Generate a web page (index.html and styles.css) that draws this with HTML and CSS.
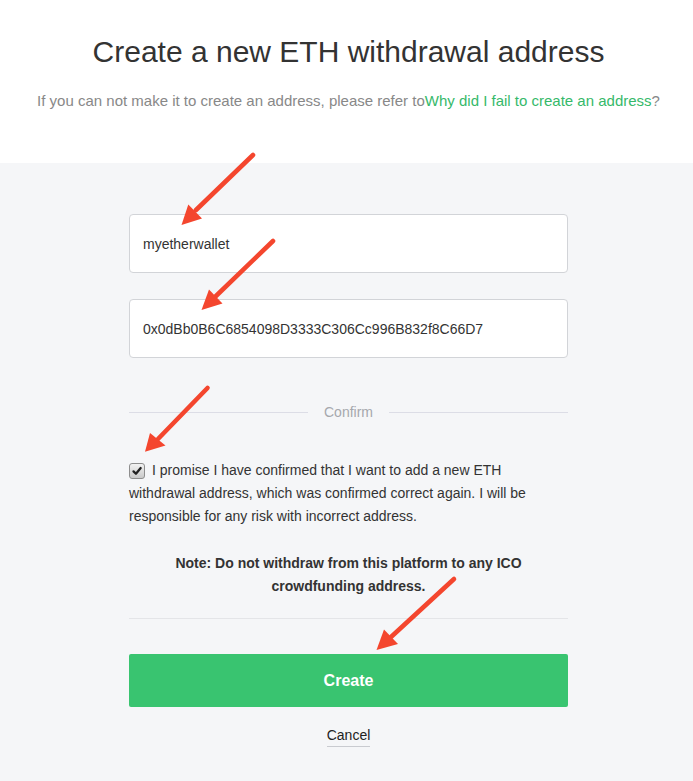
FILE: index.html
```html
<!DOCTYPE html>
<html lang="en">
<head>
<meta charset="utf-8">
<title>Create a new ETH withdrawal address</title>
<link rel="stylesheet" href="styles.css">
</head>
<body>
<div class="page">
  <header class="hero">
    <h1 class="title">Create a new ETH withdrawal address</h1>
    <p class="subtitle">If you can not make it to create an address, please refer to<a class="link" href="#">Why did I fail to create an address</a>?</p>
  </header>
  <main class="panel">
    <form class="form">
      <div class="field">myetherwallet</div>
      <div class="field">0x0dBb0B6C6854098D3333C306Cc996B832f8C66D7</div>
      <div class="divider"><span class="divider-line"></span><span class="divider-text">Confirm</span><span class="divider-line"></span></div>
      <p class="promise"><span class="checkbox"><svg viewBox="0 0 16 16" width="16" height="16"><path d="M4 8.4 L6.8 11.2 L12.2 4.6" fill="none" stroke="#222" stroke-width="2.6" stroke-linecap="round" stroke-linejoin="round"/></svg></span>I promise I have confirmed that I want to add a new ETH withdrawal address, which was confirmed correct again. I will be responsible for any risk with incorrect address.</p>
      <p class="note">Note: Do not withdraw from this platform to any ICO crowdfunding address.</p>
      <hr class="rule">
      <button type="button" class="btn-create">Create</button>
      <div class="cancel-row"><a class="cancel" href="#">Cancel</a></div>
    </form>
  </main>
  <svg class="arrows" width="693" height="781" viewBox="0 0 693 781">
    <g stroke="#f4462e" stroke-width="4.6" stroke-linecap="round" fill="#f4462e">
      <line x1="253" y1="155" x2="196" y2="210"/>
      <polygon points="181.5,225 188.3,204.5 202,218.5" stroke="none"/>
      <line x1="273" y1="241" x2="216" y2="296"/>
      <polygon points="201.5,310 209,289.5 222.5,303.5" stroke="none"/>
      <line x1="207.5" y1="388" x2="158" y2="439"/>
      <polygon points="145,451.7 150,433 165.5,445.5" stroke="none"/>
      <line x1="454" y1="579" x2="391" y2="637"/>
      <polygon points="376.5,650 384,629.5 398,644" stroke="none"/>
    </g>
  </svg>
</div>
</body>
</html>
```
FILE: styles.css
```css
* { box-sizing: border-box; }
html, body {
  margin: 0;
  padding: 0;
}
body {
  font-family: "Liberation Sans", Arial, Helvetica, sans-serif;
  color: #333;
  background: #f5f6f8;
}
.page {
  position: relative;
  width: 693px;
  min-height: 781px;
  overflow: hidden;
}
.hero {
  background: #fff;
  height: 163px;
  padding: 34px 0 0 4px;
  text-align: center;
}
.title {
  margin: 0;
  font-size: 30px;
  line-height: 36px;
  font-weight: normal;
  color: #333;
}
.subtitle {
  margin: 21px 0 0;
  font-size: 15px;
  line-height: 20px;
  color: #888;
}
.link {
  color: #36b96a;
  text-decoration: none;
}
.panel {
  background: #f5f6f8;
  padding: 51px 0 40px 4px;
}
.form {
  width: 439px;
  margin: 0 auto;
}
.field {
  height: 59px;
  background: #fff;
  border: 1px solid #d2d4d8;
  border-radius: 4px;
  padding: 0 13px;
  display: flex;
  align-items: center;
  font-size: 14px;
  color: #333;
  margin-bottom: 26px;
}
.field + .field { margin-bottom: 0; }
.divider {
  margin-top: 44px;
  height: 20px;
  display: flex;
  align-items: center;
  gap: 16px;
}
.divider-line {
  flex: 1;
  height: 1px;
  background: #dcdde6;
}
.divider-text {
  font-size: 14px;
  color: #a6a8ad;
}
.promise {
  margin: 37px 0 0;
  font-size: 14px;
  line-height: 23px;
  color: #333;
}
.checkbox {
  display: inline-flex;
  align-items: center;
  justify-content: center;
  width: 16px;
  height: 16px;
  margin-right: 7px;
  vertical-align: -3px;
  border: 1px solid #8e8e8e;
  border-radius: 3px;
  background: linear-gradient(#f2f2f2, #c9c9c9);
}
.checkbox svg { display: block; width: 14px; height: 14px; }
.note {
  margin: 24px 0 0;
  font-size: 14px;
  line-height: 23px;
  font-weight: bold;
  text-align: center;
  color: #333;
}
.rule {
  margin: 20px 0 0;
  border: 0;
  height: 1px;
  background: #e4e5e8;
}
.btn-create {
  display: block;
  width: 100%;
  height: 53px;
  margin-top: 35px;
  border: 0;
  border-radius: 2px;
  background: #39c470;
  color: #fff;
  font-family: "Liberation Sans", Arial, Helvetica, sans-serif;
  font-size: 16px;
  font-weight: bold;
}
.cancel-row {
  margin-top: 18px;
  text-align: center;
  line-height: 20px;
}
.cancel {
  font-size: 14px;
  color: #222;
  text-decoration: none;
  display: inline-block;
  padding-bottom: 1px;
  border-bottom: 1px solid #c9cbd0;
  line-height: 20px;
}
.arrows {
  position: absolute;
  left: 0;
  top: 0;
  pointer-events: none;
}
```
